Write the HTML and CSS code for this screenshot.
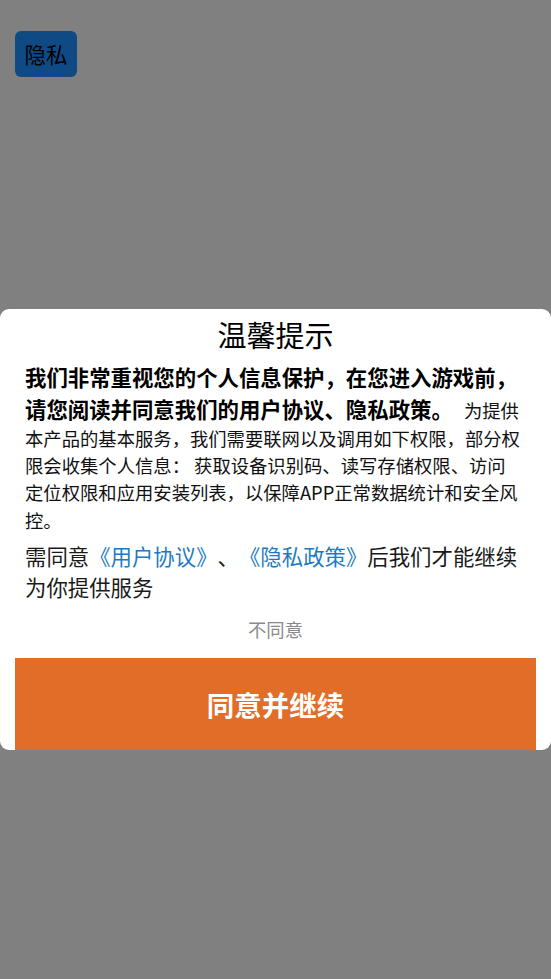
FILE: index.html
```html
<!DOCTYPE html>
<html lang="zh-CN">
<head>
<meta charset="utf-8">
<title>隐私</title>
<link rel="stylesheet" href="styles.css">
</head>
<body>
  <button class="privacy-btn" type="button">隐私</button>

  <div class="dialog" role="dialog">
    <h2 class="dialog-title">温馨提示</h2>
    <p class="notice"><strong class="notice-strong">我们非常重视您的个人信息保护，在您进入游戏前，请您阅读并同意我们的用户协议、隐私政策。</strong><span class="gap"> </span>为提供本产品的基本服务，我们需要联网以及调用如下权限，部分权限会收集个人信息： 获取设备识别码、读写存储权限、访问定位权限和应用安装列表，以保障APP正常数据统计和安全风控。</p>
    <p class="consent">需同意<a class="link" href="#">《用户协议》</a>、<a class="link" href="#">《隐私政策》</a>后我们才能继续为你提供服务</p>
    <div class="decline">不同意</div>
    <button class="agree" type="button">同意并继续</button>
  </div>
</body>
</html>
```

FILE: styles.css
```css
html, body {
  margin: 0;
  padding: 0;
}

body {
  width: 551px;
  height: 979px;
  background: #808080;
  font-family: "Noto Sans CJK SC", "Noto Sans", sans-serif;
  color: #000;
  position: relative;
  overflow: hidden;
  text-spacing-trim: space-all;
  font-kerning: none;
}

.privacy-btn {
  display: flex;
  align-items: center;
  justify-content: center;
  margin: 31px 0 0 15px;
  width: 62px;
  height: 46px;
  padding: 0;
  border: none;
  border-radius: 6px;
  background: #0f4a85;
  color: #000;
  font-family: inherit;
  font-size: 21.4px;
  line-height: 1;
}

.dialog {
  position: absolute;
  left: 0;
  right: 0;
  top: 309px;
  background: #fff;
  border-radius: 9px;
  padding-top: 4px;
  overflow: hidden;
}

.dialog-title {
  margin: 0;
  text-align: center;
  font-size: 29px;
  font-weight: normal;
  line-height: 1.5;
}

.notice {
  margin: 4px 0 0;
  padding: 0 29px 0 25px;
  font-size: 18.33px;
  line-height: 1.5;
  color: #111;
}

.notice-strong {
  font-size: 21.4px;
  line-height: 32px;
  font-weight: bold;
  color: #000;
}

.gap {
  margin-left: 7px;
}

.consent {
  margin: 6px 0 0;
  padding: 0 29px 0 25px;
  font-size: 21.4px;
  line-height: 31px;
  color: #1a1a1a;
}

.link {
  color: #1b7bc2;
  text-decoration: none;
}

.decline {
  padding: 14px 0;
  text-align: center;
  font-size: 18.33px;
  line-height: 1.5;
  color: #8a8a8a;
}

.agree {
  display: block;
  width: calc(100% - 30px);
  margin: 0 15px;
  height: 92px;
  padding: 0;
  border: none;
  background: #e16d28;
  color: #fff;
  font-family: inherit;
  font-size: 27.5px;
  font-weight: bold;
}
```
